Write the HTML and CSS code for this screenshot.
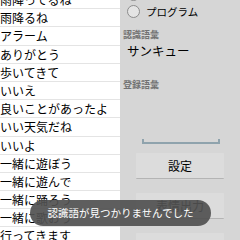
FILE: index.html
```html
<!DOCTYPE html>
<html lang="ja">
<head>
  <meta charset="UTF-8">
  <title>認識語彙</title>
  <meta name="viewport" content="width=device-width, initial-scale=1.0">
  <link rel="stylesheet" href="styles.css">
</head>
<body>

  <div class="screen">
    <ul class="word-list">
      <li>雨降ってるね</li>
      <li>雨降るね</li>
      <li>アラーム</li>
      <li>ありがとう</li>
      <li>歩いてきて</li>
      <li>いいえ</li>
      <li>良いことがあったよ</li>
      <li>いい天気だね</li>
      <li>いいよ</li>
      <li>一緒に遊ぼう</li>
      <li>一緒に遊んで</li>
      <li>一緒に踊ろう</li>
      <li>一緒に歌おう</li>
      <li>行ってきます</li>
    </ul>

    <div class="panel">
      <label class="radio radio-first"><span class="radio-dot"></span>ユーザー</label>
      <label class="radio"><span class="radio-dot"></span>プログラム</label>

      <div class="caption">認識語彙</div>
      <div class="value">サンキュー</div>

      <div class="caption caption-reg">登録語彙</div>
      <div class="edit">
        <svg width="78" height="5" viewBox="0 0 78 5">
          <path d="M1 0 V4 H77 V0" fill="none" stroke="#8fa3ad" stroke-width="2"/>
        </svg>
      </div>

      <button class="button">設定</button>
      <button class="button">表情出力</button>
      <button class="button">音声認識</button>
    </div>

    <div class="toast">認識語が見つかりませんでした</div>
  </div>

</body>
</html>
```

FILE: styles.css
```css
body {
  margin: 0;
  font-family: 'Noto Sans CJK JP', 'Noto Sans', sans-serif;
  color: #000;
}

.screen {
  position: relative;
  display: flex;
  width: 240px;
  height: 240px;
  overflow: hidden;
  background: #d6d6d6;
}

.word-list {
  list-style: none;
  margin: -9px 0 0 0;
  padding: 0;
  width: 120px;
  flex-shrink: 0;
  background: #fff;
}

.word-list li {
  height: 17.2px;
  line-height: 17.2px;
  font-size: 12px;
  white-space: nowrap;
  border-bottom: 1px solid #e4e4e4;
}

.panel {
  flex: 1;
  display: flex;
  flex-direction: column;
  padding-left: 3px;
}

.panel > * {
  flex-shrink: 0;
}

.radio {
  display: flex;
  align-items: center;
  gap: 6px;
  height: 17px;
  padding-left: 4px;
  font-size: 10.5px;
}

.radio-first {
  margin-top: -14px;
}

.radio-dot {
  width: 11px;
  height: 11px;
  border: 1px solid #8c8c8c;
  border-radius: 50%;
  background: #e4e4e4;
}

.caption {
  margin-top: 10px;
  font-size: 9px;
  line-height: 10px;
  font-weight: bold;
  color: #727272;
}

.caption-reg {
  margin-top: 21px;
}

.value {
  margin-top: 3px;
  padding-left: 4px;
  font-size: 12.5px;
  line-height: 16px;
}

.edit {
  height: 54px;
  display: flex;
  align-items: flex-end;
  padding-left: 19px;
}

.edit svg {
  display: block;
}

.button {
  margin: 9px 0 0 13px;
  width: 88px;
  height: 26px;
  border: none;
  border-bottom: 1px solid #b4b4b4;
  border-radius: 1px;
  background: #dcdcdc;
  font-family: inherit;
  font-size: 12px;
  color: #000;
  padding: 0;
}

.button + .button {
  margin-top: 14px;
}

.toast {
  position: absolute;
  left: 30px;
  top: 200px;
  width: 181px;
  height: 26px;
  border-radius: 13px;
  background: rgba(80, 80, 80, 0.92);
  color: #fff;
  font-size: 10.5px;
  line-height: 26px;
  text-align: center;
  white-space: nowrap;
}
```
